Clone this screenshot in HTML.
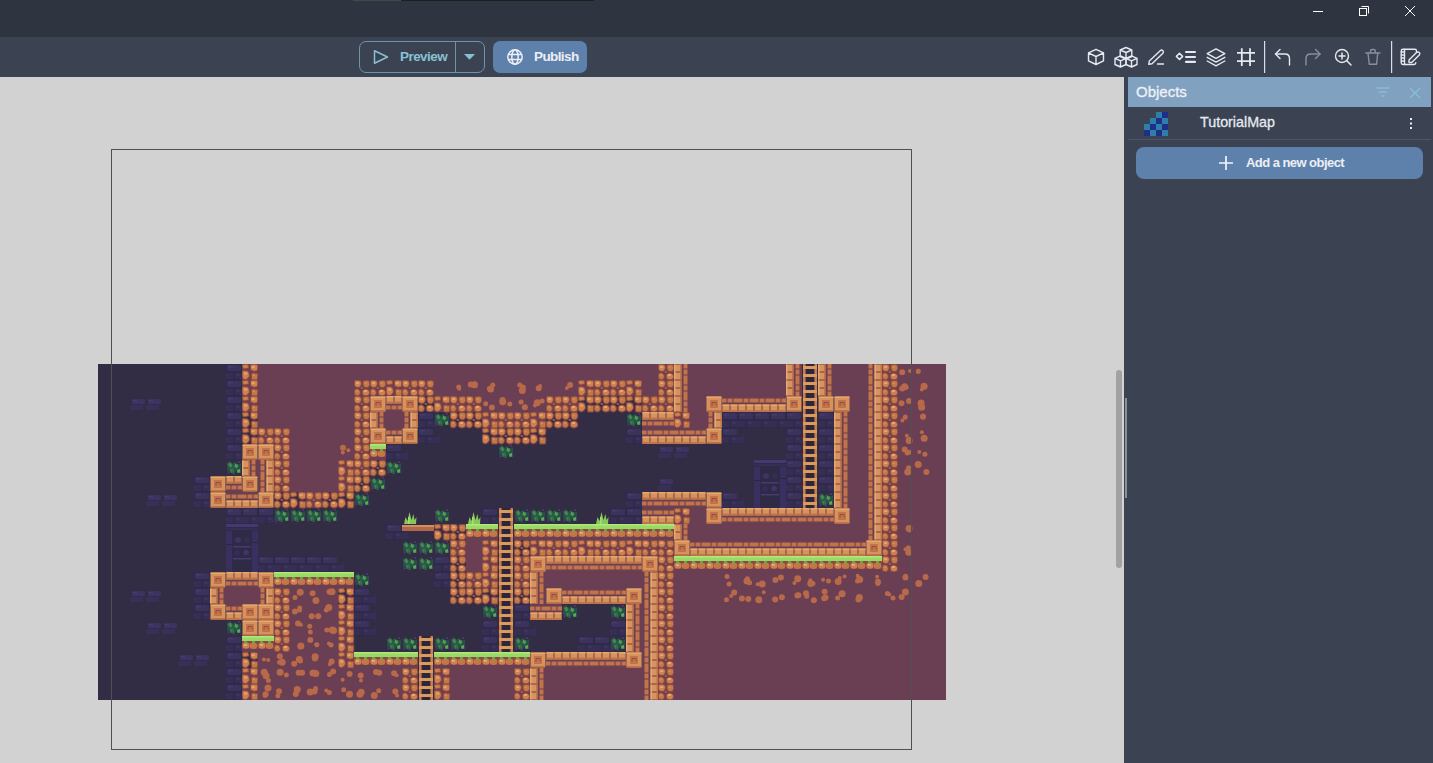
<!DOCTYPE html>
<html><head><meta charset="utf-8">
<style>
*{box-sizing:border-box}
html,body{margin:0;padding:0}
body{width:1433px;height:763px;overflow:hidden;position:relative;background:#d2d2d2;font-family:"Liberation Sans",sans-serif}
.abs{position:absolute}
#title{left:0;top:0;width:1433px;height:37px;background:#2e3440}
#tool{left:0;top:37px;width:1433px;height:40px;background:#3b4252}
#panel{left:1124px;top:77px;width:309px;height:686px;background:#3b4252}
.txt{white-space:nowrap;line-height:1}
</style></head>
<body>
<!-- canvas area -->
<div class="abs" style="left:0;top:77px;width:1124px;height:686px;background:#d2d2d2"></div>
<svg width="848" height="336" viewBox="0 0 848 336" style="position:absolute;left:98px;top:364px;display:block">
<defs>
<symbol id="m"><rect width="16" height="16" fill="#6a3e53"/></symbol>


<symbol id="sht"><rect x="0.5" y="0" width="7" height="7.5" fill="#d8925b"/><rect x="8.5" y="0" width="7" height="7.5" fill="#d8925b"/><rect x="0.5" y="0" width="7" height="1.5" fill="#e8a76d"/><rect x="8.5" y="0" width="7" height="1.5" fill="#e8a76d"/><rect x="0.5" y="5.5" width="15" height="2" fill="#c17349"/><rect x="0" y="9.5" width="4.5" height="4" fill="#c17349"/><rect x="5.5" y="9.5" width="5" height="4" fill="#c17349"/><rect x="11.5" y="9.5" width="4.5" height="4" fill="#c17349"/></symbol>
<symbol id="shb"><rect x="0.5" y="8.5" width="7" height="7.5" fill="#d8925b"/><rect x="8.5" y="8.5" width="7" height="7.5" fill="#d8925b"/><rect x="0.5" y="8.5" width="7" height="1.5" fill="#e8a76d"/><rect x="8.5" y="8.5" width="7" height="1.5" fill="#e8a76d"/><rect x="0.5" y="14" width="15" height="2" fill="#c17349"/><rect x="0" y="2.5" width="4.5" height="4" fill="#c17349"/><rect x="5.5" y="2.5" width="5" height="4" fill="#c17349"/><rect x="11.5" y="2.5" width="4.5" height="4" fill="#c17349"/></symbol>
<symbol id="svl"><rect x="0" y="0.5" width="7.5" height="7" fill="#d8925b"/><rect x="0" y="8.5" width="7.5" height="7" fill="#d8925b"/><rect x="0" y="0.5" width="1.5" height="15" fill="#e8a76d"/><rect x="6" y="0.5" width="1.5" height="15" fill="#c17349"/><rect x="9.5" y="0" width="4" height="4.5" fill="#c17349"/><rect x="9.5" y="5.5" width="4" height="5" fill="#c17349"/><rect x="9.5" y="11.5" width="4" height="4.5" fill="#c17349"/></symbol>
<symbol id="svr"><rect x="8.5" y="0.5" width="7.5" height="7" fill="#d8925b"/><rect x="8.5" y="8.5" width="7.5" height="7" fill="#d8925b"/><rect x="8.5" y="0.5" width="1.5" height="15" fill="#e8a76d"/><rect x="14.5" y="0.5" width="1.5" height="15" fill="#c17349"/><rect x="2.5" y="0" width="4" height="4.5" fill="#c17349"/><rect x="2.5" y="5.5" width="4" height="5" fill="#c17349"/><rect x="2.5" y="11.5" width="4" height="4.5" fill="#c17349"/></symbol>
<symbol id="sb"><rect x="0.5" y="0.5" width="15" height="15" rx="1" fill="#d8925b"/><rect x="0.5" y="0.5" width="15" height="1.5" fill="#e8a76d"/><rect x="4" y="4" width="8" height="8" fill="#c17349"/><path d="M6 9.5V6.5H10V9" fill="none" stroke="#8e4f48" stroke-width="1"/><rect x="0.5" y="14" width="15" height="1.5" fill="#c17349"/></symbol>


<symbol id="r"><g stroke="#8a4842" stroke-width="0.9" transform="translate(8 8) scale(1.12) translate(-8 -8)"><path d="M1 2.8Q1.2 0.8 3.5 0.9L6.3 1.3Q7.8 2.2 7.4 4.5L6.9 6.6Q5.4 7.8 3 7.3L1.3 6.3Z" fill="#cd8050"/><path d="M9 1.8Q11.5 0.6 14 1.4Q15.4 3 15 5.3L13.8 7.3Q11.5 8.3 9.6 7Q8.4 5 9 1.8Z" fill="#c27749"/><path d="M1 10.2Q1.6 8.6 4 8.7Q6.4 9.3 6.7 12Q6.4 14.7 4 15.1Q1.4 14.9 1 13Z" fill="#c27749"/><path d="M8.2 10.6Q9.1 8.6 12 8.9Q14.9 9.6 15 12.5Q14.4 15 11.5 15.1Q8.6 14.9 8.2 12.8Z" fill="#cd8050"/></g><rect x="2.2" y="2.2" width="3" height="2" fill="#e6a66b"/><rect x="10" y="10" width="3" height="2" fill="#e6a66b"/><rect x="10.5" y="2.8" width="2.5" height="1.5" fill="#d58b57"/><rect x="2.3" y="10.2" width="2" height="2" fill="#d58b57"/><rect x="6.8" y="7" width="2" height="2" fill="#a65e45"/></symbol>
<symbol id="r2"><g stroke="#8a4842" stroke-width="0.9" transform="translate(8 8) scale(1.12) translate(-8 -8)"><path d="M1 1.8Q3 0.7 6 1Q7.4 2.1 7 4.3Q5 5.5 2.1 5.2Q0.8 4 1 1.8Z" fill="#c27749"/><path d="M8.6 1.2Q12 0.5 14.9 1.7Q15.3 5 14.4 6.9Q11 7.8 8.9 6.4Q8.2 4 8.6 1.2Z" fill="#cd8050"/><path d="M1 7.2Q3.5 6.2 6.4 7.3Q7.8 9.5 7.4 12Q6 15 3 15Q0.8 13.9 1 11Z" fill="#cd8050"/><path d="M9.3 9.1Q12 8.5 15 9.4Q15.3 13 14.6 14.9Q12 15.3 9.6 14.9Q8.8 12 9.3 9.1Z" fill="#c27749"/></g><rect x="9.6" y="2.2" width="3" height="2" fill="#e6a66b"/><rect x="2.2" y="8.6" width="3" height="2" fill="#e6a66b"/><rect x="2.2" y="1.8" width="2" height="1.5" fill="#d58b57"/><rect x="10.6" y="10.2" width="2" height="2" fill="#d58b57"/></symbol>
<symbol id="g"><rect y="5" width="16" height="8" fill="#8a4842"/><ellipse cx="4" cy="9.5" rx="3.6" ry="3.2" fill="#cd8050"/><ellipse cx="11.5" cy="9.8" rx="3.8" ry="3.3" fill="#c27749"/><rect x="2" y="8" width="3" height="2" fill="#e6a66b"/><rect width="16" height="5" fill="#99d966"/><rect width="16" height="1.5" fill="#b2e77c"/><rect x="2" y="5" width="3" height="2" fill="#5da94a"/><rect x="10" y="5" width="3" height="2" fill="#5da94a"/></symbol>
<symbol id="b"><rect width="16" height="16" fill="#2f2a45"/><rect x="1" y="1" width="14" height="6" rx="1" fill="#3c325e"/><rect x="2" y="2" width="5" height="1.5" fill="#463a6c"/><rect x="-7" y="9" width="14" height="6" rx="1" fill="#372e56"/><rect x="9" y="9" width="14" height="6" rx="1" fill="#372e56"/><rect x="10" y="10" width="4" height="1.5" fill="#41366a"/></symbol>
<symbol id="f"><rect x="2" y="3" width="13" height="5" rx="1" fill="#3d3360"/><rect x="3" y="4" width="4" height="1.5" fill="#473b6e"/><rect x="0" y="9" width="13" height="5" rx="1" fill="#393058"/></symbol>
<symbol id="d"><rect width="16" height="16" fill="#2f2a45"/></symbol>
<symbol id="cab"><rect width="32" height="48" fill="#2f2a45"/><rect x="0" y="0" width="32" height="3" fill="#443970"/><rect x="0" y="4.5" width="32" height="1.2" fill="#3c3262"/><rect x="0" y="7" width="6" height="41" fill="#393060"/><rect x="26" y="7" width="6" height="41" fill="#393060"/><rect x="0" y="20" width="6" height="1" fill="#2a2540"/><rect x="26" y="18" width="6" height="1" fill="#2a2540"/><rect x="7" y="22" width="18" height="1.5" fill="#473b70"/><rect x="7" y="34" width="18" height="1.5" fill="#473b70"/><circle cx="12" cy="16" r="2.8" fill="#3f3566"/><circle cx="21" cy="16" r="3" fill="#352d58"/><circle cx="11" cy="29" r="3" fill="#352d58"/><circle cx="20" cy="28.5" r="2.8" fill="#3f3566"/></symbol>
<symbol id="v"><path d="M1 3L4 1L6 4L9 2L12 5L15 3L15 9L13 12L10 11L8 15L5 12L2 14L1 9Z" fill="#2d4f48"/><path d="M2 4L5 2.5L6.5 6L4 8Z" fill="#3f8c52"/><path d="M9 3.5L12.5 5L11 8.5L8.5 7Z" fill="#4a9e55"/><path d="M4 9L7 8.5L8 12L5 13Z" fill="#3a7f4e"/><path d="M11 10L14 9L14.5 12.5L11.5 13Z" fill="#55ad5a"/><path d="M6 5Q9 7 7 10Q5 12 8 14" fill="none" stroke="#2a6a4c" stroke-width="1"/><rect x="12" y="1" width="2" height="2" fill="#46396a"/><rect x="2" y="11" width="2" height="2" fill="#46396a"/></symbol>
<symbol id="t"><path d="M2 16 L3.5 9 L5.5 13 L7.5 4 L9.5 12 L11.5 6 L12.5 12 L14.5 9 L14 16 Z" fill="#83c859"/><rect x="6" y="9" width="1.5" height="7" fill="#a8df74"/></symbol>
<symbol id="w"><rect y="1" width="16" height="6" fill="#b06849"/><rect y="1" width="16" height="2" fill="#d3905c"/></symbol>
<symbol id="l"><rect x="1" width="14" height="16" fill="#2c273b"/><rect x="1" width="2.6" height="16" fill="#c97d4d"/><rect x="12.4" width="2.6" height="16" fill="#c97d4d"/><rect x="1" y="2" width="14" height="3" fill="#dc9a5f"/><rect x="1" y="10" width="14" height="3" fill="#dc9a5f"/></symbol>
</defs>
<rect width="848" height="336" fill="#322d44"/>
<use href="#b" x="128" y="0"/><use href="#m" x="144" y="0"/><use href="#r2" x="144" y="0"/><use href="#m" x="160" y="0"/><use href="#m" x="176" y="0"/><use href="#m" x="192" y="0"/><use href="#m" x="208" y="0"/><use href="#m" x="224" y="0"/><use href="#m" x="240" y="0"/><use href="#m" x="256" y="0"/><use href="#m" x="272" y="0"/><use href="#m" x="288" y="0"/><use href="#m" x="304" y="0"/><use href="#m" x="320" y="0"/><use href="#m" x="336" y="0"/><use href="#m" x="352" y="0"/><use href="#m" x="368" y="0"/><use href="#m" x="384" y="0"/><use href="#m" x="400" y="0"/><use href="#m" x="416" y="0"/><use href="#m" x="432" y="0"/><use href="#m" x="448" y="0"/><use href="#m" x="464" y="0"/><use href="#m" x="480" y="0"/><use href="#m" x="496" y="0"/><use href="#m" x="512" y="0"/><use href="#m" x="528" y="0"/><use href="#m" x="544" y="0"/><use href="#m" x="560" y="0"/><use href="#r" x="560" y="0"/><use href="#m" x="576" y="0"/><use href="#svl" x="576" y="0"/><use href="#m" x="592" y="0"/><use href="#m" x="608" y="0"/><use href="#m" x="624" y="0"/><use href="#m" x="640" y="0"/><use href="#m" x="656" y="0"/><use href="#m" x="672" y="0"/><use href="#m" x="688" y="0"/><use href="#svl" x="688" y="0"/><use href="#l" x="704" y="0"/><use href="#m" x="720" y="0"/><use href="#svl" x="720" y="0"/><use href="#m" x="736" y="0"/><use href="#m" x="752" y="0"/><use href="#m" x="768" y="0"/><use href="#svr" x="768" y="0"/><use href="#m" x="784" y="0"/><use href="#r" x="784" y="0"/><use href="#m" x="800" y="0"/><circle cx="812.0" cy="7.1" r="2" fill="#b8694a" shape-rendering="auto"/><circle cx="804.2" cy="8.3" r="3" fill="#b8694a" shape-rendering="auto"/><use href="#m" x="816" y="0"/><circle cx="820.0" cy="8.1" r="2" fill="#b8694a" shape-rendering="auto"/><circle cx="820.3" cy="7.3" r="2.5" fill="#b8694a" shape-rendering="auto"/><circle cx="820.3" cy="7.3" r="2" fill="#b8694a" shape-rendering="auto"/><use href="#m" x="832" y="0"/><use href="#b" x="128" y="16"/><use href="#m" x="144" y="16"/><use href="#r2" x="144" y="16"/><use href="#m" x="160" y="16"/><use href="#m" x="176" y="16"/><use href="#m" x="192" y="16"/><use href="#m" x="208" y="16"/><use href="#m" x="224" y="16"/><use href="#m" x="240" y="16"/><use href="#m" x="256" y="16"/><use href="#r" x="256" y="16"/><use href="#m" x="272" y="16"/><use href="#r" x="272" y="16"/><use href="#m" x="288" y="16"/><use href="#r2" x="288" y="16"/><use href="#m" x="304" y="16"/><use href="#r" x="304" y="16"/><use href="#m" x="320" y="16"/><use href="#r" x="320" y="16"/><use href="#m" x="336" y="16"/><use href="#m" x="352" y="16"/><circle cx="361.2" cy="24.7" r="2" fill="#b8694a" shape-rendering="auto"/><circle cx="360.7" cy="23.1" r="2.5" fill="#b8694a" shape-rendering="auto"/><use href="#m" x="368" y="16"/><circle cx="376.5" cy="20.7" r="3.5" fill="#b8694a" shape-rendering="auto"/><circle cx="372.8" cy="20.6" r="3" fill="#b8694a" shape-rendering="auto"/><use href="#m" x="384" y="16"/><circle cx="394.8" cy="21.1" r="2.5" fill="#b8694a" shape-rendering="auto"/><circle cx="390.9" cy="24.4" r="2" fill="#b8694a" shape-rendering="auto"/><circle cx="392.6" cy="25.1" r="3.5" fill="#b8694a" shape-rendering="auto"/><use href="#m" x="400" y="16"/><use href="#m" x="416" y="16"/><circle cx="424.3" cy="26.5" r="3.5" fill="#b8694a" shape-rendering="auto"/><circle cx="424.8" cy="23.6" r="3" fill="#b8694a" shape-rendering="auto"/><circle cx="421.7" cy="21.1" r="2.5" fill="#b8694a" shape-rendering="auto"/><use href="#m" x="432" y="16"/><circle cx="440.7" cy="24.2" r="3" fill="#b8694a" shape-rendering="auto"/><circle cx="442.1" cy="22.1" r="2" fill="#b8694a" shape-rendering="auto"/><use href="#m" x="448" y="16"/><use href="#m" x="464" y="16"/><circle cx="472.1" cy="21.0" r="3" fill="#b8694a" shape-rendering="auto"/><circle cx="468.9" cy="23.9" r="2" fill="#b8694a" shape-rendering="auto"/><use href="#m" x="480" y="16"/><use href="#r2" x="480" y="16"/><use href="#m" x="496" y="16"/><use href="#r" x="496" y="16"/><use href="#m" x="512" y="16"/><use href="#r" x="512" y="16"/><use href="#m" x="528" y="16"/><use href="#r2" x="528" y="16"/><use href="#m" x="544" y="16"/><use href="#m" x="560" y="16"/><use href="#r" x="560" y="16"/><use href="#m" x="576" y="16"/><use href="#svl" x="576" y="16"/><use href="#m" x="592" y="16"/><use href="#m" x="608" y="16"/><use href="#m" x="624" y="16"/><use href="#m" x="640" y="16"/><use href="#m" x="656" y="16"/><use href="#m" x="672" y="16"/><use href="#m" x="688" y="16"/><use href="#svl" x="688" y="16"/><use href="#l" x="704" y="16"/><use href="#m" x="720" y="16"/><use href="#svl" x="720" y="16"/><use href="#m" x="736" y="16"/><use href="#m" x="752" y="16"/><use href="#m" x="768" y="16"/><use href="#svr" x="768" y="16"/><use href="#m" x="784" y="16"/><use href="#r" x="784" y="16"/><use href="#m" x="800" y="16"/><circle cx="804.2" cy="24.5" r="3" fill="#b8694a" shape-rendering="auto"/><circle cx="806.6" cy="22.7" r="3.5" fill="#b8694a" shape-rendering="auto"/><circle cx="808.7" cy="23.6" r="2" fill="#b8694a" shape-rendering="auto"/><use href="#m" x="816" y="16"/><circle cx="823.8" cy="25.5" r="2" fill="#b8694a" shape-rendering="auto"/><circle cx="826.1" cy="22.3" r="3.5" fill="#b8694a" shape-rendering="auto"/><use href="#m" x="832" y="16"/><use href="#f" x="32" y="32"/><use href="#f" x="48" y="32"/><use href="#b" x="128" y="32"/><use href="#m" x="144" y="32"/><use href="#r2" x="144" y="32"/><use href="#m" x="160" y="32"/><use href="#m" x="176" y="32"/><use href="#m" x="192" y="32"/><use href="#m" x="208" y="32"/><use href="#m" x="224" y="32"/><use href="#m" x="240" y="32"/><use href="#m" x="256" y="32"/><use href="#r" x="256" y="32"/><use href="#m" x="272" y="32"/><use href="#sb" x="272" y="32"/><use href="#m" x="288" y="32"/><use href="#sht" x="288" y="32"/><use href="#m" x="304" y="32"/><use href="#sb" x="304" y="32"/><use href="#r" x="320" y="32"/><use href="#m" x="336" y="32"/><use href="#r2" x="336" y="32"/><use href="#m" x="352" y="32"/><use href="#r" x="352" y="32"/><use href="#m" x="368" y="32"/><use href="#r" x="368" y="32"/><use href="#m" x="384" y="32"/><circle cx="393.9" cy="43.5" r="3" fill="#b8694a" shape-rendering="auto"/><circle cx="387.7" cy="39.7" r="2.5" fill="#b8694a" shape-rendering="auto"/><use href="#m" x="400" y="32"/><circle cx="404.6" cy="36.0" r="3" fill="#b8694a" shape-rendering="auto"/><circle cx="404.7" cy="37.7" r="3.5" fill="#b8694a" shape-rendering="auto"/><circle cx="411.8" cy="40.0" r="2.5" fill="#b8694a" shape-rendering="auto"/><use href="#m" x="416" y="32"/><circle cx="423.1" cy="38.0" r="2.5" fill="#b8694a" shape-rendering="auto"/><circle cx="426.9" cy="43.3" r="3" fill="#b8694a" shape-rendering="auto"/><use href="#m" x="432" y="32"/><circle cx="439.2" cy="38.7" r="3.5" fill="#b8694a" shape-rendering="auto"/><circle cx="444.1" cy="36.9" r="2.5" fill="#b8694a" shape-rendering="auto"/><circle cx="436.9" cy="41.4" r="2" fill="#b8694a" shape-rendering="auto"/><use href="#m" x="448" y="32"/><use href="#r" x="448" y="32"/><use href="#m" x="464" y="32"/><use href="#r" x="464" y="32"/><use href="#r2" x="480" y="32"/><use href="#r" x="496" y="32"/><use href="#r" x="512" y="32"/><use href="#r2" x="528" y="32"/><use href="#m" x="544" y="32"/><use href="#r" x="544" y="32"/><use href="#m" x="560" y="32"/><use href="#r" x="560" y="32"/><use href="#m" x="576" y="32"/><use href="#svl" x="576" y="32"/><use href="#m" x="592" y="32"/><use href="#m" x="608" y="32"/><use href="#sb" x="608" y="32"/><use href="#m" x="624" y="32"/><use href="#shb" x="624" y="32"/><use href="#m" x="640" y="32"/><use href="#shb" x="640" y="32"/><use href="#m" x="656" y="32"/><use href="#shb" x="656" y="32"/><use href="#m" x="672" y="32"/><use href="#shb" x="672" y="32"/><use href="#sb" x="688" y="32"/><use href="#l" x="704" y="32"/><use href="#sb" x="720" y="32"/><use href="#m" x="736" y="32"/><use href="#sb" x="736" y="32"/><use href="#m" x="752" y="32"/><use href="#m" x="768" y="32"/><use href="#svr" x="768" y="32"/><use href="#m" x="784" y="32"/><use href="#r" x="784" y="32"/><use href="#m" x="800" y="32"/><circle cx="811.0" cy="37.1" r="3" fill="#b8694a" shape-rendering="auto"/><circle cx="803.5" cy="39.3" r="3" fill="#b8694a" shape-rendering="auto"/><use href="#m" x="816" y="32"/><circle cx="824.6" cy="44.1" r="2" fill="#b8694a" shape-rendering="auto"/><circle cx="823.6" cy="43.3" r="3.5" fill="#b8694a" shape-rendering="auto"/><circle cx="823.1" cy="39.0" r="3.5" fill="#b8694a" shape-rendering="auto"/><use href="#m" x="832" y="32"/><use href="#b" x="128" y="48"/><use href="#r2" x="144" y="48"/><use href="#m" x="160" y="48"/><use href="#m" x="176" y="48"/><use href="#m" x="192" y="48"/><use href="#m" x="208" y="48"/><use href="#m" x="224" y="48"/><use href="#m" x="240" y="48"/><use href="#m" x="256" y="48"/><use href="#r" x="256" y="48"/><use href="#m" x="272" y="48"/><use href="#svl" x="272" y="48"/><use href="#m" x="288" y="48"/><use href="#m" x="304" y="48"/><use href="#svr" x="304" y="48"/><use href="#b" x="320" y="48"/><use href="#v" x="336" y="48"/><use href="#r" x="352" y="48"/><use href="#r" x="368" y="48"/><use href="#m" x="384" y="48"/><use href="#r2" x="384" y="48"/><use href="#m" x="400" y="48"/><use href="#r" x="400" y="48"/><use href="#m" x="416" y="48"/><use href="#r" x="416" y="48"/><use href="#m" x="432" y="48"/><use href="#r2" x="432" y="48"/><use href="#r" x="448" y="48"/><use href="#r" x="464" y="48"/><use href="#v" x="528" y="48"/><use href="#m" x="544" y="48"/><use href="#sht" x="544" y="48"/><use href="#m" x="560" y="48"/><use href="#sht" x="560" y="48"/><use href="#m" x="576" y="48"/><use href="#r2" x="576" y="48"/><use href="#m" x="592" y="48"/><use href="#m" x="608" y="48"/><use href="#svr" x="608" y="48"/><use href="#b" x="624" y="48"/><use href="#b" x="640" y="48"/><use href="#b" x="656" y="48"/><use href="#b" x="672" y="48"/><use href="#b" x="688" y="48"/><use href="#l" x="704" y="48"/><use href="#b" x="720" y="48"/><use href="#m" x="736" y="48"/><use href="#svl" x="736" y="48"/><use href="#m" x="752" y="48"/><use href="#m" x="768" y="48"/><use href="#svr" x="768" y="48"/><use href="#m" x="784" y="48"/><use href="#r" x="784" y="48"/><use href="#m" x="800" y="48"/><circle cx="807.1" cy="53.2" r="2.5" fill="#b8694a" shape-rendering="auto"/><circle cx="807.5" cy="52.5" r="2" fill="#b8694a" shape-rendering="auto"/><circle cx="804.4" cy="56.6" r="2" fill="#b8694a" shape-rendering="auto"/><use href="#m" x="816" y="48"/><circle cx="825.0" cy="52.1" r="2.5" fill="#b8694a" shape-rendering="auto"/><circle cx="825.0" cy="52.8" r="3" fill="#b8694a" shape-rendering="auto"/><use href="#m" x="832" y="48"/><use href="#b" x="128" y="64"/><use href="#r2" x="144" y="64"/><use href="#m" x="160" y="64"/><use href="#r" x="160" y="64"/><use href="#m" x="176" y="64"/><use href="#r" x="176" y="64"/><use href="#m" x="192" y="64"/><use href="#m" x="208" y="64"/><use href="#m" x="224" y="64"/><use href="#m" x="240" y="64"/><use href="#m" x="256" y="64"/><use href="#r" x="256" y="64"/><use href="#m" x="272" y="64"/><use href="#sb" x="272" y="64"/><use href="#m" x="288" y="64"/><use href="#shb" x="288" y="64"/><use href="#sb" x="304" y="64"/><use href="#b" x="320" y="64"/><use href="#r2" x="384" y="64"/><use href="#r" x="400" y="64"/><use href="#r" x="416" y="64"/><use href="#r2" x="432" y="64"/><use href="#b" x="528" y="64"/><use href="#m" x="544" y="64"/><use href="#shb" x="544" y="64"/><use href="#m" x="560" y="64"/><use href="#shb" x="560" y="64"/><use href="#m" x="576" y="64"/><use href="#shb" x="576" y="64"/><use href="#m" x="592" y="64"/><use href="#shb" x="592" y="64"/><use href="#sb" x="608" y="64"/><use href="#b" x="624" y="64"/><use href="#b" x="688" y="64"/><use href="#l" x="704" y="64"/><use href="#b" x="720" y="64"/><use href="#m" x="736" y="64"/><use href="#svl" x="736" y="64"/><use href="#m" x="752" y="64"/><use href="#m" x="768" y="64"/><use href="#svr" x="768" y="64"/><use href="#m" x="784" y="64"/><use href="#r" x="784" y="64"/><use href="#m" x="800" y="64"/><circle cx="808.9" cy="71.8" r="2" fill="#b8694a" shape-rendering="auto"/><circle cx="811.1" cy="76.4" r="3.5" fill="#b8694a" shape-rendering="auto"/><use href="#m" x="816" y="64"/><circle cx="823.9" cy="68.3" r="2" fill="#b8694a" shape-rendering="auto"/><circle cx="826.2" cy="74.2" r="3.5" fill="#b8694a" shape-rendering="auto"/><use href="#m" x="832" y="64"/><use href="#b" x="128" y="80"/><use href="#sb" x="144" y="80"/><use href="#m" x="160" y="80"/><use href="#sb" x="160" y="80"/><use href="#m" x="176" y="80"/><use href="#r" x="176" y="80"/><use href="#m" x="192" y="80"/><use href="#m" x="208" y="80"/><use href="#m" x="224" y="80"/><use href="#m" x="240" y="80"/><circle cx="245.0" cy="83.7" r="3" fill="#b8694a" shape-rendering="auto"/><circle cx="244.8" cy="88.4" r="2" fill="#b8694a" shape-rendering="auto"/><circle cx="250.3" cy="86.2" r="2" fill="#b8694a" shape-rendering="auto"/><use href="#m" x="256" y="80"/><use href="#r" x="256" y="80"/><use href="#m" x="272" y="80"/><use href="#g" x="272" y="80"/><use href="#b" x="288" y="80"/><use href="#v" x="400" y="80"/><use href="#f" x="560" y="80"/><use href="#f" x="576" y="80"/><use href="#b" x="688" y="80"/><use href="#l" x="704" y="80"/><use href="#b" x="720" y="80"/><use href="#m" x="736" y="80"/><use href="#svl" x="736" y="80"/><use href="#m" x="752" y="80"/><use href="#m" x="768" y="80"/><use href="#svr" x="768" y="80"/><use href="#m" x="784" y="80"/><use href="#r" x="784" y="80"/><use href="#m" x="800" y="80"/><circle cx="811.1" cy="88.2" r="2.5" fill="#b8694a" shape-rendering="auto"/><circle cx="806.7" cy="85.5" r="3" fill="#b8694a" shape-rendering="auto"/><circle cx="809.2" cy="89.0" r="2.5" fill="#b8694a" shape-rendering="auto"/><use href="#m" x="816" y="80"/><circle cx="826.9" cy="90.2" r="2.5" fill="#b8694a" shape-rendering="auto"/><circle cx="821.3" cy="87.9" r="2" fill="#b8694a" shape-rendering="auto"/><use href="#m" x="832" y="80"/><use href="#v" x="128" y="96"/><use href="#m" x="144" y="96"/><use href="#svl" x="144" y="96"/><use href="#m" x="160" y="96"/><use href="#svr" x="160" y="96"/><use href="#m" x="176" y="96"/><use href="#r" x="176" y="96"/><use href="#m" x="192" y="96"/><use href="#m" x="208" y="96"/><use href="#m" x="224" y="96"/><use href="#m" x="240" y="96"/><use href="#r2" x="240" y="96"/><use href="#m" x="256" y="96"/><use href="#r" x="256" y="96"/><use href="#r" x="272" y="96"/><use href="#v" x="288" y="96"/><use href="#d" x="656" y="96"/><use href="#d" x="672" y="96"/><use href="#b" x="688" y="96"/><use href="#l" x="704" y="96"/><use href="#b" x="720" y="96"/><use href="#m" x="736" y="96"/><use href="#svl" x="736" y="96"/><use href="#m" x="752" y="96"/><use href="#m" x="768" y="96"/><use href="#svr" x="768" y="96"/><use href="#m" x="784" y="96"/><use href="#r" x="784" y="96"/><use href="#m" x="800" y="96"/><circle cx="810.6" cy="103.8" r="2.5" fill="#b8694a" shape-rendering="auto"/><circle cx="809.7" cy="108.1" r="3.5" fill="#b8694a" shape-rendering="auto"/><use href="#m" x="816" y="96"/><circle cx="828.4" cy="108.1" r="3" fill="#b8694a" shape-rendering="auto"/><circle cx="820.2" cy="100.4" r="3.5" fill="#b8694a" shape-rendering="auto"/><circle cx="821.3" cy="101.3" r="2" fill="#b8694a" shape-rendering="auto"/><use href="#m" x="832" y="96"/><use href="#b" x="96" y="112"/><use href="#sb" x="112" y="112"/><use href="#m" x="128" y="112"/><use href="#sht" x="128" y="112"/><use href="#sb" x="144" y="112"/><use href="#m" x="160" y="112"/><use href="#svr" x="160" y="112"/><use href="#m" x="176" y="112"/><use href="#r" x="176" y="112"/><use href="#m" x="192" y="112"/><use href="#m" x="208" y="112"/><use href="#m" x="224" y="112"/><use href="#m" x="240" y="112"/><use href="#r2" x="240" y="112"/><use href="#r" x="256" y="112"/><use href="#v" x="272" y="112"/><use href="#f" x="560" y="112"/><use href="#d" x="656" y="112"/><use href="#d" x="672" y="112"/><use href="#b" x="688" y="112"/><use href="#l" x="704" y="112"/><use href="#b" x="720" y="112"/><use href="#m" x="736" y="112"/><use href="#svl" x="736" y="112"/><use href="#m" x="752" y="112"/><use href="#m" x="768" y="112"/><use href="#svr" x="768" y="112"/><use href="#m" x="784" y="112"/><use href="#r" x="784" y="112"/><use href="#m" x="800" y="112"/><use href="#m" x="816" y="112"/><use href="#m" x="832" y="112"/><use href="#f" x="48" y="128"/><use href="#f" x="64" y="128"/><use href="#b" x="96" y="128"/><use href="#sb" x="112" y="128"/><use href="#m" x="128" y="128"/><use href="#shb" x="128" y="128"/><use href="#m" x="144" y="128"/><use href="#shb" x="144" y="128"/><use href="#sb" x="160" y="128"/><use href="#r" x="176" y="128"/><use href="#r2" x="192" y="128"/><use href="#m" x="208" y="128"/><use href="#r" x="208" y="128"/><use href="#r" x="224" y="128"/><use href="#r2" x="240" y="128"/><use href="#v" x="256" y="128"/><use href="#b" x="528" y="128"/><use href="#m" x="544" y="128"/><use href="#sht" x="544" y="128"/><use href="#m" x="560" y="128"/><use href="#sht" x="560" y="128"/><use href="#m" x="576" y="128"/><use href="#sht" x="576" y="128"/><use href="#m" x="592" y="128"/><use href="#sht" x="592" y="128"/><use href="#sb" x="608" y="128"/><use href="#b" x="624" y="128"/><use href="#d" x="656" y="128"/><use href="#d" x="672" y="128"/><use href="#b" x="688" y="128"/><use href="#l" x="704" y="128"/><use href="#v" x="720" y="128"/><use href="#m" x="736" y="128"/><use href="#svl" x="736" y="128"/><use href="#m" x="752" y="128"/><use href="#m" x="768" y="128"/><use href="#svr" x="768" y="128"/><use href="#m" x="784" y="128"/><use href="#r" x="784" y="128"/><use href="#m" x="800" y="128"/><use href="#m" x="816" y="128"/><use href="#m" x="832" y="128"/><use href="#b" x="128" y="144"/><use href="#b" x="144" y="144"/><use href="#b" x="160" y="144"/><use href="#v" x="176" y="144"/><use href="#v" x="192" y="144"/><use href="#v" x="208" y="144"/><use href="#v" x="224" y="144"/><use href="#t" x="304" y="144"/><use href="#v" x="336" y="144"/><use href="#t" x="368" y="144"/><use href="#b" x="384" y="144"/><use href="#l" x="400" y="144"/><use href="#v" x="416" y="144"/><use href="#v" x="432" y="144"/><use href="#v" x="448" y="144"/><use href="#v" x="464" y="144"/><use href="#t" x="496" y="144"/><use href="#b" x="512" y="144"/><use href="#b" x="528" y="144"/><use href="#m" x="544" y="144"/><use href="#shb" x="544" y="144"/><use href="#m" x="560" y="144"/><use href="#shb" x="560" y="144"/><use href="#m" x="576" y="144"/><use href="#r2" x="576" y="144"/><use href="#m" x="592" y="144"/><use href="#m" x="608" y="144"/><use href="#sb" x="608" y="144"/><use href="#m" x="624" y="144"/><use href="#sht" x="624" y="144"/><use href="#m" x="640" y="144"/><use href="#sht" x="640" y="144"/><use href="#m" x="656" y="144"/><use href="#sht" x="656" y="144"/><use href="#m" x="672" y="144"/><use href="#sht" x="672" y="144"/><use href="#m" x="688" y="144"/><use href="#sht" x="688" y="144"/><use href="#m" x="704" y="144"/><use href="#sht" x="704" y="144"/><use href="#m" x="720" y="144"/><use href="#sht" x="720" y="144"/><use href="#m" x="736" y="144"/><use href="#sb" x="736" y="144"/><use href="#m" x="752" y="144"/><use href="#m" x="768" y="144"/><use href="#svr" x="768" y="144"/><use href="#m" x="784" y="144"/><use href="#r" x="784" y="144"/><use href="#m" x="800" y="144"/><use href="#m" x="816" y="144"/><use href="#m" x="832" y="144"/><use href="#d" x="128" y="160"/><use href="#d" x="144" y="160"/><use href="#b" x="288" y="160"/><use href="#w" x="304" y="160"/><use href="#w" x="320" y="160"/><use href="#r2" x="336" y="160"/><use href="#r" x="352" y="160"/><use href="#m" x="368" y="160"/><use href="#g" x="368" y="160"/><use href="#m" x="384" y="160"/><use href="#g" x="384" y="160"/><use href="#l" x="400" y="160"/><use href="#m" x="416" y="160"/><use href="#g" x="416" y="160"/><use href="#m" x="432" y="160"/><use href="#g" x="432" y="160"/><use href="#m" x="448" y="160"/><use href="#g" x="448" y="160"/><use href="#m" x="464" y="160"/><use href="#g" x="464" y="160"/><use href="#m" x="480" y="160"/><use href="#g" x="480" y="160"/><use href="#m" x="496" y="160"/><use href="#g" x="496" y="160"/><use href="#m" x="512" y="160"/><use href="#g" x="512" y="160"/><use href="#m" x="528" y="160"/><use href="#g" x="528" y="160"/><use href="#m" x="544" y="160"/><use href="#g" x="544" y="160"/><use href="#m" x="560" y="160"/><use href="#g" x="560" y="160"/><use href="#m" x="576" y="160"/><use href="#svl" x="576" y="160"/><use href="#m" x="592" y="160"/><use href="#m" x="608" y="160"/><use href="#m" x="624" y="160"/><use href="#m" x="640" y="160"/><use href="#m" x="656" y="160"/><use href="#m" x="672" y="160"/><use href="#m" x="688" y="160"/><use href="#m" x="704" y="160"/><use href="#m" x="720" y="160"/><use href="#m" x="736" y="160"/><use href="#m" x="752" y="160"/><use href="#m" x="768" y="160"/><use href="#svr" x="768" y="160"/><use href="#m" x="784" y="160"/><use href="#r" x="784" y="160"/><use href="#m" x="800" y="160"/><circle cx="811.7" cy="166.6" r="2" fill="#b8694a" shape-rendering="auto"/><circle cx="811.0" cy="164.6" r="3.5" fill="#b8694a" shape-rendering="auto"/><use href="#m" x="816" y="160"/><use href="#m" x="832" y="160"/><use href="#d" x="128" y="176"/><use href="#d" x="144" y="176"/><use href="#v" x="304" y="176"/><use href="#v" x="320" y="176"/><use href="#v" x="336" y="176"/><use href="#m" x="352" y="176"/><use href="#r" x="352" y="176"/><use href="#m" x="368" y="176"/><use href="#m" x="384" y="176"/><use href="#r2" x="384" y="176"/><use href="#l" x="400" y="176"/><use href="#r" x="416" y="176"/><use href="#m" x="432" y="176"/><use href="#r2" x="432" y="176"/><use href="#m" x="448" y="176"/><use href="#r" x="448" y="176"/><use href="#m" x="464" y="176"/><use href="#r" x="464" y="176"/><use href="#m" x="480" y="176"/><use href="#r2" x="480" y="176"/><use href="#m" x="496" y="176"/><use href="#r" x="496" y="176"/><use href="#m" x="512" y="176"/><use href="#r" x="512" y="176"/><use href="#m" x="528" y="176"/><use href="#r2" x="528" y="176"/><use href="#m" x="544" y="176"/><use href="#r" x="544" y="176"/><use href="#m" x="560" y="176"/><use href="#r" x="560" y="176"/><use href="#m" x="576" y="176"/><use href="#sb" x="576" y="176"/><use href="#m" x="592" y="176"/><use href="#shb" x="592" y="176"/><use href="#m" x="608" y="176"/><use href="#shb" x="608" y="176"/><use href="#m" x="624" y="176"/><use href="#shb" x="624" y="176"/><use href="#m" x="640" y="176"/><use href="#shb" x="640" y="176"/><use href="#m" x="656" y="176"/><use href="#shb" x="656" y="176"/><use href="#m" x="672" y="176"/><use href="#shb" x="672" y="176"/><use href="#m" x="688" y="176"/><use href="#shb" x="688" y="176"/><use href="#m" x="704" y="176"/><use href="#shb" x="704" y="176"/><use href="#m" x="720" y="176"/><use href="#shb" x="720" y="176"/><use href="#m" x="736" y="176"/><use href="#shb" x="736" y="176"/><use href="#m" x="752" y="176"/><use href="#shb" x="752" y="176"/><use href="#m" x="768" y="176"/><use href="#sb" x="768" y="176"/><use href="#m" x="784" y="176"/><use href="#r" x="784" y="176"/><use href="#m" x="800" y="176"/><circle cx="810.3" cy="183.8" r="2.5" fill="#b8694a" shape-rendering="auto"/><circle cx="807.4" cy="185.2" r="2" fill="#b8694a" shape-rendering="auto"/><circle cx="810.7" cy="188.2" r="3.5" fill="#b8694a" shape-rendering="auto"/><use href="#m" x="816" y="176"/><use href="#m" x="832" y="176"/><use href="#d" x="128" y="192"/><use href="#d" x="144" y="192"/><use href="#b" x="160" y="192"/><use href="#b" x="176" y="192"/><use href="#b" x="192" y="192"/><use href="#b" x="208" y="192"/><use href="#b" x="224" y="192"/><use href="#v" x="304" y="192"/><use href="#v" x="320" y="192"/><use href="#b" x="336" y="192"/><use href="#r" x="352" y="192"/><use href="#m" x="368" y="192"/><use href="#m" x="384" y="192"/><use href="#r2" x="384" y="192"/><use href="#l" x="400" y="192"/><use href="#m" x="416" y="192"/><use href="#r" x="416" y="192"/><use href="#m" x="432" y="192"/><use href="#sb" x="432" y="192"/><use href="#m" x="448" y="192"/><use href="#sht" x="448" y="192"/><use href="#m" x="464" y="192"/><use href="#sht" x="464" y="192"/><use href="#m" x="480" y="192"/><use href="#sht" x="480" y="192"/><use href="#m" x="496" y="192"/><use href="#sht" x="496" y="192"/><use href="#m" x="512" y="192"/><use href="#sht" x="512" y="192"/><use href="#m" x="528" y="192"/><use href="#sht" x="528" y="192"/><use href="#m" x="544" y="192"/><use href="#sb" x="544" y="192"/><use href="#m" x="560" y="192"/><use href="#r" x="560" y="192"/><use href="#m" x="576" y="192"/><use href="#g" x="576" y="192"/><use href="#m" x="592" y="192"/><use href="#g" x="592" y="192"/><use href="#m" x="608" y="192"/><use href="#g" x="608" y="192"/><use href="#m" x="624" y="192"/><use href="#g" x="624" y="192"/><use href="#m" x="640" y="192"/><use href="#g" x="640" y="192"/><use href="#m" x="656" y="192"/><use href="#g" x="656" y="192"/><use href="#m" x="672" y="192"/><use href="#g" x="672" y="192"/><use href="#m" x="688" y="192"/><use href="#g" x="688" y="192"/><use href="#m" x="704" y="192"/><use href="#g" x="704" y="192"/><use href="#m" x="720" y="192"/><use href="#g" x="720" y="192"/><use href="#m" x="736" y="192"/><use href="#g" x="736" y="192"/><use href="#m" x="752" y="192"/><use href="#g" x="752" y="192"/><use href="#m" x="768" y="192"/><use href="#g" x="768" y="192"/><use href="#m" x="784" y="192"/><use href="#r" x="784" y="192"/><use href="#m" x="800" y="192"/><use href="#m" x="816" y="192"/><use href="#m" x="832" y="192"/><use href="#b" x="96" y="208"/><use href="#sb" x="112" y="208"/><use href="#m" x="128" y="208"/><use href="#sht" x="128" y="208"/><use href="#m" x="144" y="208"/><use href="#sht" x="144" y="208"/><use href="#sb" x="160" y="208"/><use href="#m" x="176" y="208"/><use href="#g" x="176" y="208"/><use href="#m" x="192" y="208"/><use href="#g" x="192" y="208"/><use href="#m" x="208" y="208"/><use href="#g" x="208" y="208"/><use href="#m" x="224" y="208"/><use href="#g" x="224" y="208"/><use href="#m" x="240" y="208"/><use href="#g" x="240" y="208"/><use href="#v" x="256" y="208"/><use href="#b" x="336" y="208"/><use href="#r" x="352" y="208"/><use href="#m" x="368" y="208"/><use href="#r" x="368" y="208"/><use href="#m" x="384" y="208"/><use href="#r2" x="384" y="208"/><use href="#l" x="400" y="208"/><use href="#m" x="416" y="208"/><use href="#r" x="416" y="208"/><use href="#m" x="432" y="208"/><use href="#svl" x="432" y="208"/><use href="#m" x="448" y="208"/><use href="#m" x="464" y="208"/><use href="#m" x="480" y="208"/><use href="#m" x="496" y="208"/><use href="#m" x="512" y="208"/><use href="#m" x="528" y="208"/><use href="#m" x="544" y="208"/><use href="#svr" x="544" y="208"/><use href="#m" x="560" y="208"/><use href="#r" x="560" y="208"/><use href="#m" x="576" y="208"/><use href="#m" x="592" y="208"/><use href="#m" x="608" y="208"/><use href="#m" x="624" y="208"/><circle cx="631.1" cy="220.0" r="2.5" fill="#b8694a" shape-rendering="auto"/><circle cx="629.0" cy="212.6" r="2.5" fill="#b8694a" shape-rendering="auto"/><use href="#m" x="640" y="208"/><circle cx="651.6" cy="218.8" r="2.5" fill="#b8694a" shape-rendering="auto"/><circle cx="649.0" cy="216.9" r="3.5" fill="#b8694a" shape-rendering="auto"/><circle cx="649.4" cy="214.7" r="2.5" fill="#b8694a" shape-rendering="auto"/><use href="#m" x="656" y="208"/><circle cx="659.6" cy="220.2" r="2" fill="#b8694a" shape-rendering="auto"/><circle cx="664.2" cy="219.9" r="3.5" fill="#b8694a" shape-rendering="auto"/><use href="#m" x="672" y="208"/><circle cx="682.9" cy="213.4" r="3" fill="#b8694a" shape-rendering="auto"/><circle cx="677.4" cy="216.0" r="3" fill="#b8694a" shape-rendering="auto"/><use href="#m" x="688" y="208"/><circle cx="696.4" cy="219.0" r="2" fill="#b8694a" shape-rendering="auto"/><circle cx="699.7" cy="214.7" r="3.5" fill="#b8694a" shape-rendering="auto"/><use href="#m" x="704" y="208"/><circle cx="712.8" cy="219.6" r="3.5" fill="#b8694a" shape-rendering="auto"/><circle cx="714.9" cy="219.4" r="2.5" fill="#b8694a" shape-rendering="auto"/><circle cx="712.3" cy="216.2" r="2" fill="#b8694a" shape-rendering="auto"/><use href="#m" x="720" y="208"/><circle cx="730.5" cy="217.0" r="2.5" fill="#b8694a" shape-rendering="auto"/><circle cx="725.1" cy="215.8" r="2" fill="#b8694a" shape-rendering="auto"/><use href="#m" x="736" y="208"/><circle cx="740.1" cy="217.6" r="3.5" fill="#b8694a" shape-rendering="auto"/><circle cx="746.6" cy="212.5" r="2" fill="#b8694a" shape-rendering="auto"/><circle cx="741.7" cy="214.0" r="2" fill="#b8694a" shape-rendering="auto"/><use href="#m" x="752" y="208"/><circle cx="759.6" cy="211.8" r="2" fill="#b8694a" shape-rendering="auto"/><circle cx="759.5" cy="217.0" r="2.5" fill="#b8694a" shape-rendering="auto"/><circle cx="761.7" cy="215.6" r="3.5" fill="#b8694a" shape-rendering="auto"/><use href="#m" x="768" y="208"/><circle cx="780.0" cy="217.8" r="3" fill="#b8694a" shape-rendering="auto"/><circle cx="779.8" cy="219.5" r="2.5" fill="#b8694a" shape-rendering="auto"/><circle cx="779.1" cy="212.7" r="2" fill="#b8694a" shape-rendering="auto"/><use href="#m" x="784" y="208"/><use href="#m" x="800" y="208"/><circle cx="807.5" cy="212.2" r="2.5" fill="#b8694a" shape-rendering="auto"/><circle cx="807.4" cy="213.4" r="3" fill="#b8694a" shape-rendering="auto"/><use href="#m" x="816" y="208"/><circle cx="827.6" cy="212.9" r="3" fill="#b8694a" shape-rendering="auto"/><circle cx="820.8" cy="219.4" r="3.5" fill="#b8694a" shape-rendering="auto"/><use href="#m" x="832" y="208"/><use href="#f" x="32" y="224"/><use href="#f" x="48" y="224"/><use href="#b" x="96" y="224"/><use href="#m" x="112" y="224"/><use href="#svl" x="112" y="224"/><use href="#m" x="128" y="224"/><use href="#m" x="144" y="224"/><use href="#m" x="160" y="224"/><use href="#svr" x="160" y="224"/><use href="#m" x="176" y="224"/><use href="#r" x="176" y="224"/><use href="#m" x="192" y="224"/><circle cx="202.2" cy="228.3" r="3.5" fill="#b8694a" shape-rendering="auto"/><circle cx="197.0" cy="233.5" r="2.5" fill="#b8694a" shape-rendering="auto"/><use href="#m" x="208" y="224"/><circle cx="217.9" cy="236.4" r="3.5" fill="#b8694a" shape-rendering="auto"/><circle cx="214.6" cy="229.3" r="3" fill="#b8694a" shape-rendering="auto"/><use href="#m" x="224" y="224"/><circle cx="234.0" cy="227.7" r="3.5" fill="#b8694a" shape-rendering="auto"/><circle cx="231.5" cy="227.7" r="3" fill="#b8694a" shape-rendering="auto"/><use href="#r2" x="240" y="224"/><use href="#b" x="256" y="224"/><use href="#r" x="352" y="224"/><use href="#r" x="368" y="224"/><use href="#r2" x="384" y="224"/><use href="#l" x="400" y="224"/><use href="#r" x="416" y="224"/><use href="#m" x="432" y="224"/><use href="#svl" x="432" y="224"/><use href="#m" x="448" y="224"/><use href="#sb" x="448" y="224"/><use href="#m" x="464" y="224"/><use href="#shb" x="464" y="224"/><use href="#m" x="480" y="224"/><use href="#shb" x="480" y="224"/><use href="#m" x="496" y="224"/><use href="#shb" x="496" y="224"/><use href="#m" x="512" y="224"/><use href="#shb" x="512" y="224"/><use href="#m" x="528" y="224"/><use href="#sb" x="528" y="224"/><use href="#m" x="544" y="224"/><use href="#svr" x="544" y="224"/><use href="#m" x="560" y="224"/><use href="#r" x="560" y="224"/><use href="#m" x="576" y="224"/><use href="#m" x="592" y="224"/><use href="#m" x="608" y="224"/><use href="#m" x="624" y="224"/><circle cx="633.1" cy="232.1" r="2" fill="#b8694a" shape-rendering="auto"/><circle cx="628.5" cy="235.8" r="2.5" fill="#b8694a" shape-rendering="auto"/><circle cx="636.2" cy="228.4" r="3" fill="#b8694a" shape-rendering="auto"/><use href="#m" x="640" y="224"/><circle cx="643.9" cy="234.5" r="3" fill="#b8694a" shape-rendering="auto"/><circle cx="650.3" cy="234.9" r="3" fill="#b8694a" shape-rendering="auto"/><use href="#m" x="656" y="224"/><circle cx="660.8" cy="235.8" r="3.5" fill="#b8694a" shape-rendering="auto"/><circle cx="665.8" cy="228.3" r="2" fill="#b8694a" shape-rendering="auto"/><use href="#m" x="672" y="224"/><circle cx="677.2" cy="235.6" r="3" fill="#b8694a" shape-rendering="auto"/><circle cx="683.9" cy="233.2" r="3" fill="#b8694a" shape-rendering="auto"/><circle cx="676.3" cy="235.2" r="2" fill="#b8694a" shape-rendering="auto"/><use href="#m" x="688" y="224"/><circle cx="699.3" cy="231.6" r="3" fill="#b8694a" shape-rendering="auto"/><circle cx="700.4" cy="231.3" r="3" fill="#b8694a" shape-rendering="auto"/><use href="#m" x="704" y="224"/><circle cx="708.7" cy="232.2" r="2.5" fill="#b8694a" shape-rendering="auto"/><circle cx="715.9" cy="236.2" r="3" fill="#b8694a" shape-rendering="auto"/><circle cx="708.0" cy="229.3" r="3" fill="#b8694a" shape-rendering="auto"/><use href="#m" x="720" y="224"/><circle cx="726.2" cy="234.3" r="3" fill="#b8694a" shape-rendering="auto"/><circle cx="727.5" cy="233.5" r="3" fill="#b8694a" shape-rendering="auto"/><circle cx="726.6" cy="227.7" r="3" fill="#b8694a" shape-rendering="auto"/><use href="#m" x="736" y="224"/><circle cx="739.6" cy="234.1" r="2.5" fill="#b8694a" shape-rendering="auto"/><circle cx="744.1" cy="229.7" r="3.5" fill="#b8694a" shape-rendering="auto"/><use href="#m" x="752" y="224"/><circle cx="761.4" cy="233.4" r="3.5" fill="#b8694a" shape-rendering="auto"/><circle cx="760.4" cy="235.5" r="3" fill="#b8694a" shape-rendering="auto"/><use href="#m" x="768" y="224"/><use href="#m" x="784" y="224"/><circle cx="789.4" cy="229.6" r="2.5" fill="#b8694a" shape-rendering="auto"/><circle cx="795.0" cy="233.9" r="2.5" fill="#b8694a" shape-rendering="auto"/><circle cx="791.1" cy="230.6" r="2" fill="#b8694a" shape-rendering="auto"/><use href="#m" x="800" y="224"/><circle cx="803.6" cy="233.1" r="3" fill="#b8694a" shape-rendering="auto"/><circle cx="807.4" cy="228.0" r="3.5" fill="#b8694a" shape-rendering="auto"/><use href="#m" x="816" y="224"/><use href="#m" x="832" y="224"/><use href="#b" x="96" y="240"/><use href="#sb" x="112" y="240"/><use href="#m" x="128" y="240"/><use href="#shb" x="128" y="240"/><use href="#m" x="144" y="240"/><use href="#sb" x="144" y="240"/><use href="#m" x="160" y="240"/><use href="#sb" x="160" y="240"/><use href="#m" x="176" y="240"/><use href="#r" x="176" y="240"/><use href="#m" x="192" y="240"/><circle cx="201.5" cy="246.0" r="2.5" fill="#b8694a" shape-rendering="auto"/><circle cx="201.7" cy="243.9" r="2.5" fill="#b8694a" shape-rendering="auto"/><circle cx="196.9" cy="247.5" r="3" fill="#b8694a" shape-rendering="auto"/><use href="#m" x="208" y="240"/><circle cx="220.2" cy="252.3" r="3" fill="#b8694a" shape-rendering="auto"/><circle cx="213.7" cy="252.2" r="3" fill="#b8694a" shape-rendering="auto"/><use href="#m" x="224" y="240"/><circle cx="230.7" cy="243.5" r="3.5" fill="#b8694a" shape-rendering="auto"/><circle cx="228.3" cy="246.0" r="2.5" fill="#b8694a" shape-rendering="auto"/><use href="#m" x="240" y="240"/><use href="#r2" x="240" y="240"/><use href="#b" x="256" y="240"/><use href="#v" x="384" y="240"/><use href="#l" x="400" y="240"/><use href="#b" x="416" y="240"/><use href="#m" x="432" y="240"/><use href="#shb" x="432" y="240"/><use href="#m" x="448" y="240"/><use href="#shb" x="448" y="240"/><use href="#v" x="464" y="240"/><use href="#v" x="512" y="240"/><use href="#m" x="528" y="240"/><use href="#svl" x="528" y="240"/><use href="#m" x="544" y="240"/><use href="#svr" x="544" y="240"/><use href="#m" x="560" y="240"/><use href="#r" x="560" y="240"/><use href="#m" x="576" y="240"/><use href="#m" x="592" y="240"/><use href="#m" x="608" y="240"/><use href="#m" x="624" y="240"/><use href="#m" x="640" y="240"/><use href="#m" x="656" y="240"/><use href="#m" x="672" y="240"/><use href="#m" x="688" y="240"/><use href="#m" x="704" y="240"/><use href="#m" x="720" y="240"/><use href="#m" x="736" y="240"/><use href="#m" x="752" y="240"/><use href="#m" x="768" y="240"/><use href="#m" x="784" y="240"/><use href="#m" x="800" y="240"/><use href="#m" x="816" y="240"/><use href="#m" x="832" y="240"/><use href="#f" x="48" y="256"/><use href="#f" x="64" y="256"/><use href="#v" x="128" y="256"/><use href="#sb" x="144" y="256"/><use href="#m" x="160" y="256"/><use href="#sb" x="160" y="256"/><use href="#m" x="176" y="256"/><use href="#r" x="176" y="256"/><use href="#m" x="192" y="256"/><circle cx="200.0" cy="259.5" r="3" fill="#b8694a" shape-rendering="auto"/><circle cx="202.9" cy="260.8" r="2" fill="#b8694a" shape-rendering="auto"/><use href="#m" x="208" y="256"/><circle cx="211.7" cy="262.2" r="2.5" fill="#b8694a" shape-rendering="auto"/><circle cx="212.3" cy="268.1" r="2.5" fill="#b8694a" shape-rendering="auto"/><use href="#m" x="224" y="256"/><circle cx="235.5" cy="266.6" r="3.5" fill="#b8694a" shape-rendering="auto"/><circle cx="234.4" cy="266.0" r="3.5" fill="#b8694a" shape-rendering="auto"/><circle cx="228.8" cy="266.0" r="2.5" fill="#b8694a" shape-rendering="auto"/><use href="#m" x="240" y="256"/><use href="#r2" x="240" y="256"/><use href="#b" x="256" y="256"/><use href="#b" x="384" y="256"/><use href="#l" x="400" y="256"/><use href="#b" x="416" y="256"/><use href="#b" x="512" y="256"/><use href="#m" x="528" y="256"/><use href="#svl" x="528" y="256"/><use href="#m" x="544" y="256"/><use href="#svr" x="544" y="256"/><use href="#m" x="560" y="256"/><use href="#r" x="560" y="256"/><use href="#m" x="576" y="256"/><use href="#m" x="592" y="256"/><use href="#m" x="608" y="256"/><use href="#m" x="624" y="256"/><use href="#m" x="640" y="256"/><use href="#m" x="656" y="256"/><use href="#m" x="672" y="256"/><use href="#m" x="688" y="256"/><use href="#m" x="704" y="256"/><use href="#m" x="720" y="256"/><use href="#m" x="736" y="256"/><use href="#m" x="752" y="256"/><use href="#m" x="768" y="256"/><use href="#m" x="784" y="256"/><use href="#m" x="800" y="256"/><use href="#m" x="816" y="256"/><use href="#m" x="832" y="256"/><use href="#b" x="128" y="272"/><use href="#m" x="144" y="272"/><use href="#g" x="144" y="272"/><use href="#m" x="160" y="272"/><use href="#g" x="160" y="272"/><use href="#m" x="176" y="272"/><use href="#r" x="176" y="272"/><use href="#m" x="192" y="272"/><circle cx="202.9" cy="281.9" r="3.5" fill="#b8694a" shape-rendering="auto"/><circle cx="202.1" cy="282.8" r="2.5" fill="#b8694a" shape-rendering="auto"/><use href="#m" x="208" y="272"/><circle cx="218.3" cy="280.6" r="2" fill="#b8694a" shape-rendering="auto"/><circle cx="218.9" cy="280.8" r="2.5" fill="#b8694a" shape-rendering="auto"/><circle cx="212.3" cy="275.9" r="3" fill="#b8694a" shape-rendering="auto"/><use href="#m" x="224" y="272"/><circle cx="230.9" cy="279.6" r="2" fill="#b8694a" shape-rendering="auto"/><circle cx="233.1" cy="281.1" r="2.5" fill="#b8694a" shape-rendering="auto"/><use href="#m" x="240" y="272"/><use href="#r2" x="240" y="272"/><use href="#v" x="288" y="272"/><use href="#v" x="304" y="272"/><use href="#l" x="320" y="272"/><use href="#v" x="336" y="272"/><use href="#v" x="352" y="272"/><use href="#b" x="384" y="272"/><use href="#l" x="400" y="272"/><use href="#v" x="416" y="272"/><use href="#b" x="480" y="272"/><use href="#b" x="496" y="272"/><use href="#v" x="512" y="272"/><use href="#m" x="528" y="272"/><use href="#svl" x="528" y="272"/><use href="#m" x="544" y="272"/><use href="#svr" x="544" y="272"/><use href="#m" x="560" y="272"/><use href="#r" x="560" y="272"/><use href="#m" x="576" y="272"/><use href="#m" x="592" y="272"/><use href="#m" x="608" y="272"/><use href="#m" x="624" y="272"/><use href="#m" x="640" y="272"/><use href="#m" x="656" y="272"/><use href="#m" x="672" y="272"/><use href="#m" x="688" y="272"/><use href="#m" x="704" y="272"/><use href="#m" x="720" y="272"/><use href="#m" x="736" y="272"/><use href="#m" x="752" y="272"/><use href="#m" x="768" y="272"/><use href="#m" x="784" y="272"/><use href="#m" x="800" y="272"/><use href="#m" x="816" y="272"/><use href="#m" x="832" y="272"/><use href="#f" x="80" y="288"/><use href="#f" x="96" y="288"/><use href="#b" x="128" y="288"/><use href="#r2" x="144" y="288"/><use href="#m" x="160" y="288"/><circle cx="165.9" cy="295.6" r="2" fill="#b8694a" shape-rendering="auto"/><circle cx="170.2" cy="296.0" r="2" fill="#b8694a" shape-rendering="auto"/><use href="#m" x="176" y="288"/><circle cx="184.2" cy="298.2" r="3.5" fill="#b8694a" shape-rendering="auto"/><circle cx="181.8" cy="292.2" r="3" fill="#b8694a" shape-rendering="auto"/><circle cx="181.6" cy="298.3" r="2.5" fill="#b8694a" shape-rendering="auto"/><use href="#m" x="192" y="288"/><circle cx="201.3" cy="295.6" r="3.5" fill="#b8694a" shape-rendering="auto"/><circle cx="196.2" cy="299.7" r="3" fill="#b8694a" shape-rendering="auto"/><circle cx="202.4" cy="297.1" r="2.5" fill="#b8694a" shape-rendering="auto"/><use href="#m" x="208" y="288"/><circle cx="216.9" cy="294.5" r="3" fill="#b8694a" shape-rendering="auto"/><circle cx="217.1" cy="292.7" r="3.5" fill="#b8694a" shape-rendering="auto"/><use href="#m" x="224" y="288"/><circle cx="231.9" cy="300.3" r="2" fill="#b8694a" shape-rendering="auto"/><circle cx="233.7" cy="297.6" r="3" fill="#b8694a" shape-rendering="auto"/><use href="#m" x="240" y="288"/><use href="#r2" x="240" y="288"/><use href="#m" x="256" y="288"/><use href="#g" x="256" y="288"/><use href="#m" x="272" y="288"/><use href="#g" x="272" y="288"/><use href="#m" x="288" y="288"/><use href="#g" x="288" y="288"/><use href="#m" x="304" y="288"/><use href="#g" x="304" y="288"/><use href="#l" x="320" y="288"/><use href="#m" x="336" y="288"/><use href="#g" x="336" y="288"/><use href="#m" x="352" y="288"/><use href="#g" x="352" y="288"/><use href="#m" x="368" y="288"/><use href="#g" x="368" y="288"/><use href="#m" x="384" y="288"/><use href="#g" x="384" y="288"/><use href="#m" x="400" y="288"/><use href="#g" x="400" y="288"/><use href="#m" x="416" y="288"/><use href="#g" x="416" y="288"/><use href="#sb" x="432" y="288"/><use href="#m" x="448" y="288"/><use href="#sht" x="448" y="288"/><use href="#m" x="464" y="288"/><use href="#sht" x="464" y="288"/><use href="#m" x="480" y="288"/><use href="#sht" x="480" y="288"/><use href="#m" x="496" y="288"/><use href="#sht" x="496" y="288"/><use href="#m" x="512" y="288"/><use href="#sht" x="512" y="288"/><use href="#m" x="528" y="288"/><use href="#sb" x="528" y="288"/><use href="#m" x="544" y="288"/><use href="#svr" x="544" y="288"/><use href="#m" x="560" y="288"/><use href="#r" x="560" y="288"/><use href="#m" x="576" y="288"/><use href="#m" x="592" y="288"/><use href="#m" x="608" y="288"/><use href="#m" x="624" y="288"/><use href="#m" x="640" y="288"/><use href="#m" x="656" y="288"/><use href="#m" x="672" y="288"/><use href="#m" x="688" y="288"/><use href="#m" x="704" y="288"/><use href="#m" x="720" y="288"/><use href="#m" x="736" y="288"/><use href="#m" x="752" y="288"/><use href="#m" x="768" y="288"/><use href="#m" x="784" y="288"/><use href="#m" x="800" y="288"/><use href="#m" x="816" y="288"/><use href="#m" x="832" y="288"/><use href="#b" x="128" y="304"/><use href="#m" x="144" y="304"/><use href="#r2" x="144" y="304"/><use href="#m" x="160" y="304"/><circle cx="168.1" cy="311.7" r="3.5" fill="#b8694a" shape-rendering="auto"/><circle cx="170.4" cy="316.4" r="2.5" fill="#b8694a" shape-rendering="auto"/><circle cx="166.3" cy="308.3" r="3.5" fill="#b8694a" shape-rendering="auto"/><use href="#m" x="176" y="304"/><circle cx="182.1" cy="308.2" r="3.5" fill="#b8694a" shape-rendering="auto"/><circle cx="188.4" cy="311.0" r="2.5" fill="#b8694a" shape-rendering="auto"/><use href="#m" x="192" y="304"/><circle cx="200.7" cy="308.8" r="3" fill="#b8694a" shape-rendering="auto"/><circle cx="204.1" cy="308.7" r="3" fill="#b8694a" shape-rendering="auto"/><use href="#m" x="208" y="304"/><circle cx="217.8" cy="309.6" r="3.5" fill="#b8694a" shape-rendering="auto"/><circle cx="215.0" cy="308.9" r="3.5" fill="#b8694a" shape-rendering="auto"/><use href="#m" x="224" y="304"/><circle cx="231.6" cy="310.2" r="2.5" fill="#b8694a" shape-rendering="auto"/><circle cx="231.2" cy="310.9" r="2" fill="#b8694a" shape-rendering="auto"/><circle cx="235.1" cy="307.5" r="3" fill="#b8694a" shape-rendering="auto"/><use href="#m" x="240" y="304"/><circle cx="244.6" cy="315.8" r="2" fill="#b8694a" shape-rendering="auto"/><circle cx="251.6" cy="310.1" r="3" fill="#b8694a" shape-rendering="auto"/><use href="#m" x="256" y="304"/><circle cx="263.0" cy="316.5" r="2" fill="#b8694a" shape-rendering="auto"/><circle cx="262.7" cy="311.4" r="3" fill="#b8694a" shape-rendering="auto"/><use href="#m" x="272" y="304"/><circle cx="278.0" cy="308.0" r="3" fill="#b8694a" shape-rendering="auto"/><circle cx="281.2" cy="308.8" r="3" fill="#b8694a" shape-rendering="auto"/><use href="#m" x="288" y="304"/><circle cx="296.1" cy="309.2" r="3" fill="#b8694a" shape-rendering="auto"/><circle cx="298.6" cy="311.3" r="2" fill="#b8694a" shape-rendering="auto"/><use href="#m" x="304" y="304"/><use href="#r" x="304" y="304"/><use href="#l" x="320" y="304"/><use href="#m" x="336" y="304"/><use href="#r2" x="336" y="304"/><use href="#m" x="352" y="304"/><use href="#m" x="368" y="304"/><use href="#m" x="384" y="304"/><use href="#m" x="400" y="304"/><use href="#m" x="416" y="304"/><use href="#r" x="416" y="304"/><use href="#m" x="432" y="304"/><use href="#svl" x="432" y="304"/><use href="#m" x="448" y="304"/><use href="#m" x="464" y="304"/><use href="#m" x="480" y="304"/><use href="#m" x="496" y="304"/><use href="#m" x="512" y="304"/><use href="#m" x="528" y="304"/><use href="#m" x="544" y="304"/><use href="#svr" x="544" y="304"/><use href="#m" x="560" y="304"/><use href="#r" x="560" y="304"/><use href="#m" x="576" y="304"/><use href="#m" x="592" y="304"/><use href="#m" x="608" y="304"/><use href="#m" x="624" y="304"/><use href="#m" x="640" y="304"/><use href="#m" x="656" y="304"/><use href="#m" x="672" y="304"/><use href="#m" x="688" y="304"/><use href="#m" x="704" y="304"/><use href="#m" x="720" y="304"/><use href="#m" x="736" y="304"/><use href="#m" x="752" y="304"/><use href="#m" x="768" y="304"/><use href="#m" x="784" y="304"/><use href="#m" x="800" y="304"/><use href="#m" x="816" y="304"/><use href="#m" x="832" y="304"/><use href="#b" x="128" y="320"/><use href="#m" x="144" y="320"/><use href="#r2" x="144" y="320"/><use href="#m" x="160" y="320"/><circle cx="167.1" cy="331.4" r="2.5" fill="#b8694a" shape-rendering="auto"/><circle cx="170.0" cy="323.9" r="3.5" fill="#b8694a" shape-rendering="auto"/><circle cx="167.6" cy="330.3" r="3" fill="#b8694a" shape-rendering="auto"/><use href="#m" x="176" y="320"/><circle cx="179.9" cy="331.8" r="2.5" fill="#b8694a" shape-rendering="auto"/><circle cx="181.0" cy="327.2" r="3" fill="#b8694a" shape-rendering="auto"/><use href="#m" x="192" y="320"/><circle cx="197.8" cy="330.1" r="3" fill="#b8694a" shape-rendering="auto"/><circle cx="199.2" cy="325.6" r="3.5" fill="#b8694a" shape-rendering="auto"/><use href="#m" x="208" y="320"/><circle cx="217.5" cy="324.6" r="2.5" fill="#b8694a" shape-rendering="auto"/><circle cx="212.2" cy="328.0" r="3.5" fill="#b8694a" shape-rendering="auto"/><circle cx="216.5" cy="327.6" r="3" fill="#b8694a" shape-rendering="auto"/><use href="#m" x="224" y="320"/><circle cx="231.3" cy="328.4" r="2.5" fill="#b8694a" shape-rendering="auto"/><circle cx="228.3" cy="326.6" r="2" fill="#b8694a" shape-rendering="auto"/><use href="#m" x="240" y="320"/><circle cx="245.7" cy="325.8" r="2.5" fill="#b8694a" shape-rendering="auto"/><circle cx="251.5" cy="330.2" r="3.5" fill="#b8694a" shape-rendering="auto"/><use href="#m" x="256" y="320"/><circle cx="263.2" cy="328.2" r="3.5" fill="#b8694a" shape-rendering="auto"/><circle cx="261.9" cy="330.3" r="3.5" fill="#b8694a" shape-rendering="auto"/><use href="#m" x="272" y="320"/><circle cx="280.7" cy="326.7" r="2.5" fill="#b8694a" shape-rendering="auto"/><circle cx="276.3" cy="331.6" r="3.5" fill="#b8694a" shape-rendering="auto"/><use href="#m" x="288" y="320"/><circle cx="297.3" cy="327.4" r="3" fill="#b8694a" shape-rendering="auto"/><circle cx="299.1" cy="331.4" r="2" fill="#b8694a" shape-rendering="auto"/><use href="#m" x="304" y="320"/><use href="#r" x="304" y="320"/><use href="#l" x="320" y="320"/><use href="#m" x="336" y="320"/><use href="#r2" x="336" y="320"/><use href="#m" x="352" y="320"/><use href="#m" x="368" y="320"/><use href="#m" x="384" y="320"/><use href="#m" x="400" y="320"/><use href="#m" x="416" y="320"/><use href="#r" x="416" y="320"/><use href="#m" x="432" y="320"/><use href="#svl" x="432" y="320"/><use href="#m" x="448" y="320"/><use href="#m" x="464" y="320"/><use href="#m" x="480" y="320"/><use href="#m" x="496" y="320"/><use href="#m" x="512" y="320"/><use href="#m" x="528" y="320"/><use href="#m" x="544" y="320"/><use href="#svr" x="544" y="320"/><use href="#m" x="560" y="320"/><use href="#r" x="560" y="320"/><use href="#m" x="576" y="320"/><use href="#m" x="592" y="320"/><use href="#m" x="608" y="320"/><use href="#m" x="624" y="320"/><use href="#m" x="640" y="320"/><use href="#m" x="656" y="320"/><use href="#m" x="672" y="320"/><use href="#m" x="688" y="320"/><use href="#m" x="704" y="320"/><use href="#m" x="720" y="320"/><use href="#m" x="736" y="320"/><use href="#m" x="752" y="320"/><use href="#m" x="768" y="320"/><use href="#m" x="784" y="320"/><use href="#m" x="800" y="320"/><use href="#m" x="816" y="320"/><use href="#m" x="832" y="320"/><use href="#cab" x="128" y="160"/><use href="#cab" x="656" y="96"/>
</svg>
<div class="abs" style="left:111px;top:149px;width:801px;height:601px;border:1px solid #505050"></div>
<div class="abs" style="left:1116px;top:370px;width:6px;height:198px;border-radius:3px;background:#a2a2a2"></div>

<!-- title bar -->
<div id="title" class="abs">
  <div class="abs" style="left:353px;top:0;width:48px;height:1px;background:#474747"></div>
  <div class="abs" style="left:401px;top:0;width:193px;height:1px;background:#1f1f1f"></div>
  <svg class="abs" style="left:1300px;top:0" width="133" height="25" viewBox="0 0 133 25">
    <path d="M13 11.5H23" stroke="#ffffff" stroke-width="1"/>
    <path d="M61.5 6.5H68.5V13.5" fill="none" stroke="#ffffff" stroke-width="1"/>
    <rect x="59.5" y="8.5" width="7" height="7" fill="none" stroke="#ffffff" stroke-width="1"/>
    <path d="M105 6L115 16M115 6L105 16" stroke="#ffffff" stroke-width="1"/>
  </svg>
</div>

<!-- toolbar -->
<div id="tool" class="abs">
  <!-- preview group -->
  <div class="abs" style="left:359px;top:4px;width:126px;height:32px;border:1px solid #6a97a6;border-radius:7px"></div>
  <div class="abs" style="left:455px;top:4px;width:1px;height:32px;background:#6a97a6"></div>
  <svg class="abs" style="left:372px;top:12px" width="18" height="16" viewBox="0 0 18 16">
    <path d="M2.5 1.8L15.5 8L2.5 14.2Z" fill="none" stroke="#88c0d0" stroke-width="1.5" stroke-linejoin="round"/>
  </svg>
  <div class="abs txt" style="left:400px;top:13px;font-size:13.5px;font-weight:bold;color:#88c0d0;letter-spacing:-0.55px">Preview</div>
  <svg class="abs" style="left:464px;top:17px" width="12" height="6" viewBox="0 0 12 6"><path d="M0 0H11L5.5 5.8Z" fill="#88c0d0"/></svg>
  <!-- publish -->
  <div class="abs" style="left:493px;top:4px;width:94px;height:32px;background:#5e81ac;border-radius:7px"></div>
  <svg class="abs" style="left:506px;top:11px" width="18" height="18" viewBox="0 0 18 18">
    <g fill="none" stroke="#eceff4" stroke-width="1.5">
      <circle cx="9" cy="9" r="7.2"/>
      <ellipse cx="9" cy="9" rx="3.2" ry="7.2"/>
      <path d="M2 6.6H16M2 11.4H16"/>
    </g>
  </svg>
  <div class="abs txt" style="left:534px;top:12.5px;font-size:13.5px;font-weight:bold;color:#eceff4;letter-spacing:-0.6px">Publish</div>

  <!-- right icons -->
  <svg class="abs" style="left:1080px;top:0" width="353" height="40" viewBox="0 0 353 40">
    <g fill="none" stroke="#e5e9f0" stroke-width="1.4" stroke-linejoin="round" stroke-linecap="round">
      <!-- cube -->
      <path d="M16 12.3L23.5 15.8V23.8L16 27.5L8.5 23.8V15.8Z M8.5 15.8L16 19.5L23.5 15.8 M16 19.5V27.5"/>
      <!-- cubes -->
      <g>
        <path d="M46 10.5L51.8 13V19.5L46 22L40.2 19.5V13Z M40.2 13L46 15.5L51.8 13 M46 15.5V22"/>
        <path d="M40.5 18.8L46 21.3V27.5L40.5 30L35 27.5V21.3Z M35 21.3L40.5 23.8L46 21.3 M40.5 23.8V30"/>
        <path d="M51.5 18.8L57 21.3V27.5L51.5 30L46 27.5V21.3Z M46 21.3L51.5 23.8L57 21.3 M51.5 23.8V30"/>
      </g>
      <!-- pencil -->
      <path d="M68.8 27.3L69.3 24L80.2 13.7Q81.6 12.5 82.9 13.7Q84.1 15 82.9 16.3L72 26.8Z"/>
      <path d="M77.5 27H83.5"/>
      <!-- list -->
      <path d="M99.5 16.3L102.6 19.4L99.5 22.5L96.4 19.4Z" stroke-width="1.5"/>
      <path d="M106 15H115 M106 20H115 M106 24.9H115" stroke-width="2.1"/>
      <!-- layers -->
      <path d="M136 11.8L144.8 16.6L136 21.4L127.2 16.6Z"/>
      <path d="M127.2 20.3L136 25.1L144.8 20.3"/>
      <path d="M127.2 24L136 28.8L144.8 24"/>
      <!-- grid -->
      <path d="M157 15.9H175 M157 24.1H175 M161.8 11.3V28.9 M170 11.3V28.9" stroke-width="1.8" stroke-linecap="butt"/>
      <!-- undo -->
      <path d="M195.5 17H205Q209.5 17 209.5 21.5V28"/>
      <path d="M200 12.5L195.5 17L200 21.5"/>
      <!-- magnifier -->
      <circle cx="262" cy="19" r="6.5"/>
      <path d="M266.8 23.8L271 28 M262 16V22 M259 19H265" stroke-width="1.5"/>
      <!-- notebook edit -->
      <path d="M336.5 15.5V14Q336.5 12.3 334.8 12.3H323Q321.2 12.3 321.2 14V25.8Q321.2 27.5 323 27.5H334Q335.8 27.5 335.8 25.8" />
      <path d="M324.5 12.5V27.3 M321.5 15H324.5 M321.5 18H324.5 M321.5 21H324.5 M321.5 24H324.5 M329 23L336.5 15.5Q338 14.3 339.3 15.5Q340.5 16.8 339.3 18L331.7 25.5H329Z"/>
    </g>
    <g fill="none" stroke="#8a8f99" stroke-width="1.4" stroke-linejoin="round" stroke-linecap="round">
      <!-- redo -->
      <path d="M240 17H230.5Q226 17 226 21.5V28"/>
      <path d="M235.5 12.5L240 17L235.5 21.5"/>
      <!-- trash -->
      <path d="M285.8 16H300 M288 16L289.3 27.3H296.5L297.8 16 M290.5 15.8V14Q290.5 12.5 292 12.5H293.8Q295.3 12.5 295.3 14V15.8"/>
    </g>
    <rect x="184" y="4" width="1.2" height="32" fill="#d8dee9"/>
    <rect x="311" y="4" width="1.2" height="32" fill="#d8dee9"/>
  </svg>
</div>

<!-- panel -->
<div id="panel" class="abs">
  <div class="abs" style="left:1px;top:321px;width:1.5px;height:100px;background:#8c919b"></div>
  <div class="abs" style="left:4px;top:0;width:303px;height:30px;background:#81a1c1"></div>
  <div class="abs txt" style="left:12px;top:7px;font-size:15px;color:#eef1f6;-webkit-text-stroke:0.3px #eef1f6">Objects</div>
  <svg class="abs" style="left:252px;top:10px" width="14" height="10" viewBox="0 0 14 10"><path d="M0.5 1H13.5M3 5H11M5.5 9H8.5" stroke="#8fbcd0" stroke-width="1.4"/></svg>
  <svg class="abs" style="left:285px;top:10px" width="12" height="12" viewBox="0 0 12 12"><path d="M1 1L11 11M11 1L1 11" stroke="#88c0d0" stroke-width="1.3"/></svg>
  <!-- object row -->
  <svg class="abs" style="left:20px;top:35px" width="24" height="24" viewBox="0 0 24 24" shape-rendering="crispEdges">
    <rect x="12" y="0" width="6" height="6" fill="#2e7fa6"/><rect x="18" y="0" width="6" height="6" fill="#1e2e8a"/>
    <rect x="6" y="6" width="6" height="6" fill="#2e7fa6"/><rect x="12" y="6" width="6" height="6" fill="#1e2e8a"/><rect x="18" y="6" width="6" height="6" fill="#2e7fa6"/>
    <rect x="0" y="12" width="6" height="6" fill="#2e7fa6"/><rect x="6" y="12" width="6" height="6" fill="#1e2e8a"/><rect x="12" y="12" width="6" height="6" fill="#2e7fa6"/><rect x="18" y="12" width="6" height="6" fill="#1e2e8a"/>
    <rect x="0" y="18" width="6" height="6" fill="#1e2e8a"/><rect x="6" y="18" width="6" height="6" fill="#2e7fa6"/><rect x="12" y="18" width="6" height="6" fill="#1e2e8a"/><rect x="18" y="18" width="6" height="6" fill="#2e7fa6"/>
  </svg>
  <div class="abs txt" style="left:76px;top:37.5px;font-size:14.3px;color:#e5e9f0;-webkit-text-stroke:0.3px #e5e9f0">TutorialMap</div>
  <svg class="abs" style="left:285px;top:40px" width="4" height="13" viewBox="0 0 4 13"><rect x="1" y="1" width="2" height="2" fill="#eceff4"/><rect x="1" y="5.5" width="2" height="2" fill="#eceff4"/><rect x="1" y="10" width="2" height="2" fill="#eceff4"/></svg>
  <div class="abs" style="left:4px;top:62px;width:303px;height:1px;background:#4c566a"></div>
  <div class="abs" style="left:12px;top:70px;width:287px;height:32px;background:#5e81ac;border-radius:8px"></div>
  <svg class="abs" style="left:94px;top:78px" width="16" height="16" viewBox="0 0 16 16"><path d="M8 1V15M1 8H15" stroke="#f4f6f9" stroke-width="1.7"/></svg>
  <div class="abs txt" style="left:122px;top:78.5px;font-size:13px;font-weight:bold;color:#eceff4;letter-spacing:-0.55px">Add a new object</div>
</div>
</body></html>
